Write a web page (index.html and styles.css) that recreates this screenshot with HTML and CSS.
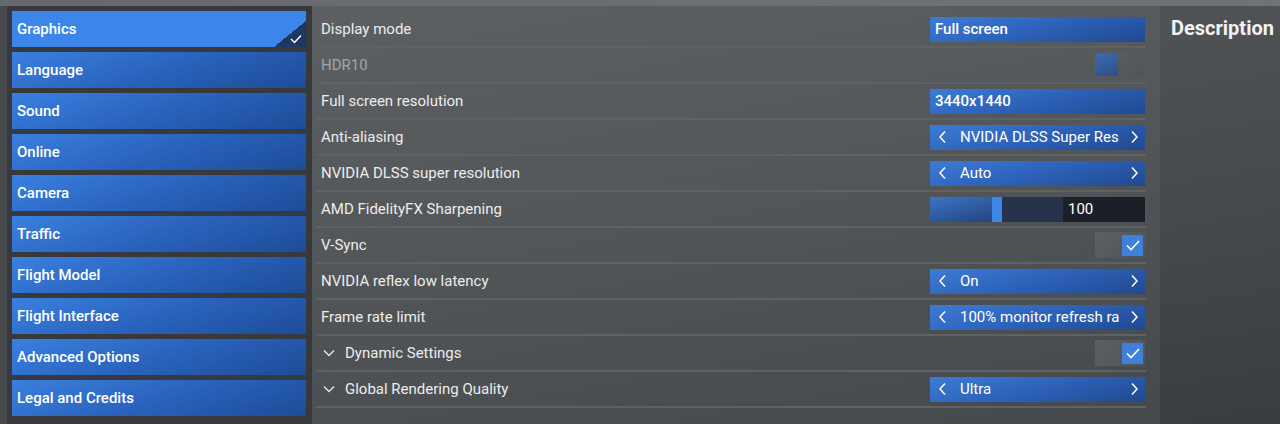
FILE: index.html
```html
<!DOCTYPE html>
<html>
	<head>
		<meta charset="UTF-8">
		<title>Options</title>
		<link rel="stylesheet" href="styles.css">
	</head>
	<body>
		<div class="topStrip"></div>
		<div id="app">
			<ul class="menu">
				<li class="current">Graphics
					<span class="corner">
						<svg width="12" height="10" viewBox="0 0 12 10"><polyline points="1,5 4.5,8.5 11,1.5" fill="none" stroke="#fff" stroke-width="1.4"/></svg>
					</span>
				</li>
				<li>Language</li>
				<li>Sound</li>
				<li>Online</li>
				<li>Camera</li>
				<li>Traffic</li>
				<li>Flight Model</li>
				<li>Flight Interface</li>
				<li>Advanced Options</li>
				<li>Legal and Credits</li>
			</ul>

			<div class="settings">
				<div class="row">
					<span class="label">Display mode</span>
					<div class="box plain">Full screen</div>
				</div>
				<div class="row">
					<span class="label disabled">HDR10</span>
					<div class="toggle off"><span class="knob"></span></div>
				</div>
				<div class="row">
					<span class="label">Full screen resolution</span>
					<div class="box plain">3440x1440</div>
				</div>
				<div class="row">
					<span class="label">Anti-aliasing</span>
					<div class="box picker">
						<svg class="arr" width="10" height="14" viewBox="0 0 10 14"><polyline points="7,1.5 2,7 7,12.5" fill="none" stroke="#fff" stroke-width="1.5"/></svg>
						<span class="val">NVIDIA DLSS Super Res</span>
						<svg class="arr" width="10" height="14" viewBox="0 0 10 14"><polyline points="3,1.5 8,7 3,12.5" fill="none" stroke="#fff" stroke-width="1.5"/></svg>
					</div>
				</div>
				<div class="row">
					<span class="label">NVIDIA DLSS super resolution</span>
					<div class="box picker">
						<svg class="arr" width="10" height="14" viewBox="0 0 10 14"><polyline points="7,1.5 2,7 7,12.5" fill="none" stroke="#fff" stroke-width="1.5"/></svg>
						<span class="val">Auto</span>
						<svg class="arr" width="10" height="14" viewBox="0 0 10 14"><polyline points="3,1.5 8,7 3,12.5" fill="none" stroke="#fff" stroke-width="1.5"/></svg>
					</div>
				</div>
				<div class="row">
					<span class="label">AMD FidelityFX Sharpening</span>
					<div class="slider">
						<div class="track">
							<span class="fill" style="width: 62px"></span>
							<span class="thumb"></span>
						</div>
						<span class="num">100</span>
					</div>
				</div>
				<div class="row">
					<span class="label">V-Sync</span>
					<div class="toggle on">
						<span class="knob">
							<svg width="14" height="11" viewBox="0 0 14 11"><polyline points="1,5.5 5,9.5 13,1" fill="none" stroke="#fff" stroke-width="1.6"/></svg>
						</span>
					</div>
				</div>
				<div class="row">
					<span class="label">NVIDIA reflex low latency</span>
					<div class="box picker">
						<svg class="arr" width="10" height="14" viewBox="0 0 10 14"><polyline points="7,1.5 2,7 7,12.5" fill="none" stroke="#fff" stroke-width="1.5"/></svg>
						<span class="val">On</span>
						<svg class="arr" width="10" height="14" viewBox="0 0 10 14"><polyline points="3,1.5 8,7 3,12.5" fill="none" stroke="#fff" stroke-width="1.5"/></svg>
					</div>
				</div>
				<div class="row">
					<span class="label">Frame rate limit</span>
					<div class="box picker">
						<svg class="arr" width="10" height="14" viewBox="0 0 10 14"><polyline points="7,1.5 2,7 7,12.5" fill="none" stroke="#fff" stroke-width="1.5"/></svg>
						<span class="val">100% monitor refresh ra</span>
						<svg class="arr" width="10" height="14" viewBox="0 0 10 14"><polyline points="3,1.5 8,7 3,12.5" fill="none" stroke="#fff" stroke-width="1.5"/></svg>
					</div>
				</div>
				<div class="row">
					<span class="label group">
						<svg class="down" width="12" height="8" viewBox="0 0 12 8"><polyline points="1,1.5 6,6.5 11,1.5" fill="none" stroke="#e6e6e6" stroke-width="1.4"/></svg>
						Dynamic Settings
					</span>
					<div class="toggle on">
						<span class="knob">
							<svg width="14" height="11" viewBox="0 0 14 11"><polyline points="1,5.5 5,9.5 13,1" fill="none" stroke="#fff" stroke-width="1.6"/></svg>
						</span>
					</div>
				</div>
				<div class="row">
					<span class="label group">
						<svg class="down" width="12" height="8" viewBox="0 0 12 8"><polyline points="1,1.5 6,6.5 11,1.5" fill="none" stroke="#e6e6e6" stroke-width="1.4"/></svg>
						Global Rendering Quality
					</span>
					<div class="box picker">
						<svg class="arr" width="10" height="14" viewBox="0 0 10 14"><polyline points="7,1.5 2,7 7,12.5" fill="none" stroke="#fff" stroke-width="1.5"/></svg>
						<span class="val">Ultra</span>
						<svg class="arr" width="10" height="14" viewBox="0 0 10 14"><polyline points="3,1.5 8,7 3,12.5" fill="none" stroke="#fff" stroke-width="1.5"/></svg>
					</div>
				</div>
			</div>

			<div class="desc">
				<h2>Description</h2>
			</div>
		</div>
	</body>
</html>
```

FILE: styles.css
```css
*{
	margin: 0;
	padding: 0;
	box-sizing: border-box;
}
ul,li{
	list-style: none;
}

body{
	width: 1280px;
	height: 424px;
	overflow: hidden;
	font-family: Roboto, "Liberation Sans", sans-serif;
	color: #ececec;
	background-color: #4b4e51;
}

.topStrip{
	height: 6px;
	background: linear-gradient(90deg, #66686b, #6d7073 60%, #707376);
}

#app{
	display: grid;
	grid-template-columns: 312px 848px 120px;
	height: 418px;
}

/* left menu */
.menu{
	display: flex;
	flex-direction: column;
	gap: 5px;
	padding: 5px 6px 0 5px;
	border-left: 7px solid #46484b;
	background-color: #38393c;
}

.menu li{
	position: relative;
	height: 36px;
	padding-left: 5px;
	font-size: 15px;
	font-weight: 500;
	line-height: 36px;
	color: #fff;
	background: linear-gradient(160deg, #3a80e0 0%, #2a63bd 50%, #1d4c98 100%);
}

.menu li.current{
	background: #3b86e8;
}

.menu .corner{
	position: absolute;
	right: 0;
	bottom: 0;
	width: 32px;
	height: 26px;
	background: linear-gradient(to top left, #1e3763 50%, transparent 50%);
}

.menu .corner svg{
	position: absolute;
	right: 4px;
	bottom: 3px;
}

/* settings list */
.settings{
	padding: 6px 14px 0 4px;
	background: linear-gradient(170deg, #5d6063 0%, #55585b 40%, #46494c 100%);
}

.row{
	display: flex;
	align-items: center;
	justify-content: space-between;
	height: 36px;
	padding: 0 1px 0 5px;
	border-bottom: 2px solid #5f6265;
}

.label{
	font-size: 15px;
	color: #ececec;
}

.label.disabled{
	color: #a3a5a8;
}

.label.group{
	display: flex;
	align-items: center;
}

.label .down{
	margin: 0 10px 0 2px;
}

.box{
	display: flex;
	align-items: center;
	width: 215px;
	height: 25px;
	font-size: 15px;
	color: #fff;
	background: linear-gradient(165deg, #3d7bd6 0%, #2b5fb4 55%, #21498f 100%);
}

.box.plain{
	padding-left: 5px;
	font-weight: 500;
}

.box.picker{
	padding: 0 6px 0 8px;
}

.box .val{
	flex: 1;
	margin-left: 12px;
	white-space: nowrap;
}

.box .arr{
	flex: none;
}

.box .val + .arr{
	margin-left: 4px;
}

/* slider */
.slider{
	display: flex;
	width: 215px;
	height: 25px;
}

.track{
	position: relative;
	width: 133px;
	background-color: #26334a;
}

.track .fill{
	position: absolute;
	left: 0;
	top: 0;
	bottom: 0;
	background: linear-gradient(165deg, #3a74c9, #25447c);
}

.track .thumb{
	position: absolute;
	left: 62px;
	top: 0;
	bottom: 0;
	width: 10px;
	background-color: #3c87ea;
}

.slider .num{
	flex: 1;
	padding-left: 5px;
	font-size: 15px;
	line-height: 25px;
	color: #fff;
	background-color: #1b1f27;
}

/* toggles */
.toggle{
	display: flex;
	align-items: center;
	width: 50px;
	height: 26px;
	padding: 3px;
	background: linear-gradient(135deg, #5c5f63, #505357);
}

.toggle .knob{
	display: flex;
	align-items: center;
	justify-content: center;
	width: 22px;
	height: 22px;
}

.toggle.off{
	padding-left: 1px;
}

.toggle.off .knob{
	background: linear-gradient(160deg, #3c6bb0, #2d4f86);
}

.toggle.on{
	justify-content: flex-end;
	padding-right: 2px;
}

.toggle.on .knob{
	width: 21px;
	height: 21px;
	background-color: #3f80da;
}

/* description */
.desc{
	padding: 10px 0 0 11px;
	background: linear-gradient(170deg, #505356 0%, #46494c 50%, #3a3d40 100%);
}

.desc h2{
	font-size: 20px;
	font-weight: 700;
	color: #f2f2f2;
}
```
